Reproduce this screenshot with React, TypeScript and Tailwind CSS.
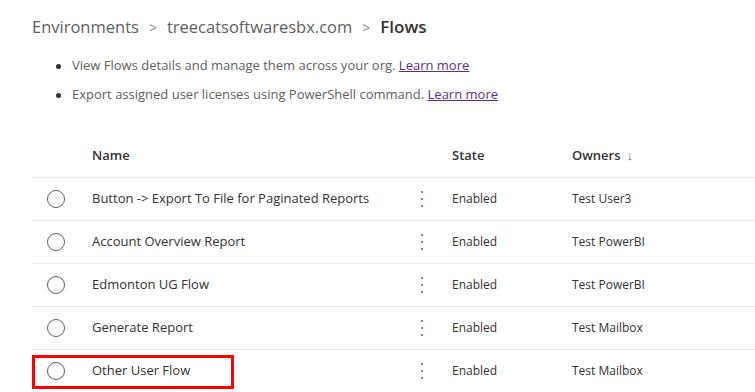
import React from "react";

const rows = [
  { name: "Button -> Export To File for Paginated Reports", owner: "Test User3" },
  { name: "Account Overview Report", owner: "Test PowerBI" },
  { name: "Edmonton UG Flow", owner: "Test PowerBI" },
  { name: "Generate Report", owner: "Test Mailbox" },
  { name: "Other User Flow", owner: "Test Mailbox", marked: true },
];

function MoreDots() {
  return (
    <svg width="4" height="18" viewBox="0 0 4 18">
      <rect x="1" y="1" width="2" height="2" fill="#9b6fb5" />
      <rect x="1" y="8" width="2" height="2" fill="#9b6fb5" />
      <rect x="1" y="15" width="2" height="2" fill="#9b6fb5" />
    </svg>
  );
}

export default function App() {
  return (
    <div className="h-[392px] w-[755px] overflow-hidden bg-white font-['Open_Sans',sans-serif] text-[#323130]">
      <div className="flex h-[54px] items-center pl-[32px] text-[16.5px] text-[#605e5c]">
        <span>Environments</span>
        <span className="mx-[10px] text-[14px] text-[#8a8886]">&gt;</span>
        <span>treecatsoftwaresbx.com</span>
        <span className="mx-[10px] text-[14px] text-[#8a8886]">&gt;</span>
        <span className="text-[17px] font-semibold text-[#323130]">Flows</span>
      </div>

      <ul className="flex flex-col gap-[9px] pl-[56px] pt-[2px] text-[13px] text-[#605e5c]">
        <li className="flex h-[20px] items-center">
          <span className="mr-[11px] h-[5px] w-[5px] rounded-full bg-[#323130]" />
          View Flows details and manage them across your org.&nbsp;
          <a className="text-[#5c2e91] underline">Learn more</a>
        </li>
        <li className="flex h-[20px] items-center">
          <span className="mr-[11px] h-[5px] w-[5px] rounded-full bg-[#323130]" />
          Export assigned user licenses using PowerShell command.&nbsp;
          <a className="text-[#5c2e91] underline">Learn more</a>
        </li>
      </ul>

      <div className="mt-[29px] pl-[32px]">
        <div className="grid h-[44px] grid-cols-[60px_318px_42px_120px_1fr] items-center border-b border-[#edebe9] text-[13px] font-semibold">
          <span />
          <span>Name</span>
          <span />
          <span>State</span>
          <span className="flex items-center gap-[6px]">
            Owners <span className="font-normal text-[#605e5c]">↓</span>
          </span>
        </div>
        {rows.map((r) => (
          <div
            key={r.name}
            className="relative grid h-[43px] grid-cols-[60px_318px_42px_120px_1fr] items-center border-b border-[#edebe9] text-[13px]"
          >
            <span className="flex pl-[15px]">
              <span className="h-[18px] w-[18px] rounded-full border border-[#605e5c]" />
            </span>
            <span>{r.name}</span>
            <span className="flex pl-[10px]">
              <MoreDots />
            </span>
            <span className="text-[12px]">Enabled</span>
            <span className="text-[12px]">{r.owner}</span>
            {r.marked && (
              <div className="absolute left-0 top-[5px] h-[34px] w-[202px] border-[3px] border-[#ff0000]" />
            )}
          </div>
        ))}
      </div>
    </div>
  );
}
